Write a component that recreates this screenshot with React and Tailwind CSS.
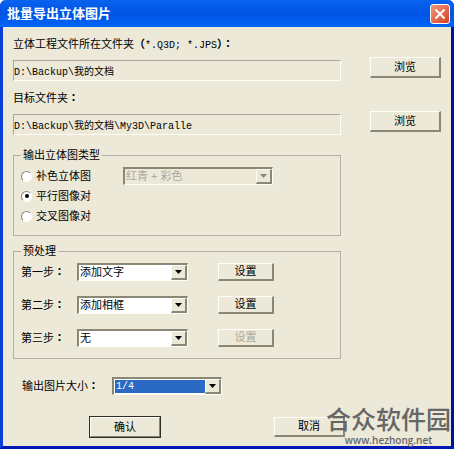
import React, { useState } from 'react';

const steps = [
  { id: 'step1', label: '第一步', value: '添加文字', enabled: true },
  { id: 'step2', label: '第二步', value: '添加相框', enabled: true },
  { id: 'step3', label: '第三步', value: '无', enabled: false },
];

const outputTypes = [
  { id: 'anaglyph', label: '补色立体图' },
  { id: 'parallel', label: '平行图像对' },
  { id: 'cross', label: '交叉图像对' },
];

// Full-width punctuation is centred in its cell in the TC face
function Punct({ children }) {
  return <span className="font-['Noto_Sans_CJK_TC',sans-serif] font-bold">{children}</span>;
}

function Button({ children, className = '', disabled = false, primary = false }) {
  return (
    <button
      type="button"
      disabled={disabled}
      className={`flex items-center justify-center border-t border-l border-[#fffef6] border-r-[#8a8776] border-b-[#8a8776] ${
        primary ? 'border-r border-b outline outline-1 outline-[#2e2d28]' : 'border-r-2 border-b-2'
      } disabled:text-[#aca899] ${className}`}
    >
      {children}
    </button>
  );
}

function Dropdown({ id, label, options, disabled = false, selected = false, className = '' }) {
  return (
    <div className={`grid border-t-2 border-l-2 border-r border-b border-t-[#8a8776] border-l-[#8a8776] border-r-[#fffef6] border-b-[#fffef6] ${disabled ? '' : 'bg-white'} ${className}`}>
      <select
        id={id}
        aria-label={label}
        disabled={disabled}
        className={`col-start-1 row-start-1 w-full min-w-0 appearance-none pr-5 leading-[13px] opacity-100 outline-none disabled:text-[#aca899] ${
          selected
            ? "border border-white bg-[#2a6ac4] bg-clip-padding pl-px font-['Liberation_Mono','Noto_Sans_CJK_SC',monospace] text-[10px] text-white"
            : 'pl-px'
        }`}
      >
        {options.map(o => <option key={o}>{o}</option>)}
      </select>
      <span className="pointer-events-none col-start-1 row-start-1 flex w-4 items-center justify-center justify-self-end border-t border-l border-r-2 border-b-2 border-[#fffef6] border-r-[#8a8776] border-b-[#8a8776] bg-[#ece9d8]">
        <svg width="7" height="4" viewBox="0 0 7 4" className={disabled ? 'fill-[#8a8776]' : 'fill-black'}>
          <path d="M0 0h7L3.5 4z" />
        </svg>
      </span>
    </div>
  );
}

function PathField({ id, label, value }) {
  return (
    <div className="flex items-end justify-between">
      <div className="w-[328px]">
        <label htmlFor={id} className="block h-4 whitespace-nowrap leading-4">{label}</label>
        <input
          id={id}
          readOnly
          defaultValue={value}
          className="mt-[9px] block h-[21px] w-full border border-[#fffef6] border-t-[#aca899] border-l-[#aca899] font-['Liberation_Mono','Noto_Sans_CJK_SC',monospace] text-[10px] outline-none"
        />
      </div>
      <Button className="mb-[3px] h-[21px] w-[71px]">浏览</Button>
    </div>
  );
}

export default function App() {
  const [type, setType] = useState('parallel');

  return (
    <div className="bg-white pr-[1px] font-['Liberation_Sans','Noto_Sans_CJK_SC',sans-serif] text-[11px] text-black">
      <div className="relative rounded-t-md border-3 border-t-0 border-[#0a3fd8] border-r-[#00109a] border-b-[#0018b4] bg-[#ece9d8]">
        <header className="-mx-[3px] flex h-[27px] items-center justify-between rounded-t-md bg-linear-to-b from-[#0a62f0] via-[#0054e3] to-[#0064fa] pr-1 pl-[7px]">
          <h1 className="text-[13px] font-bold text-white">批量导出立体图片</h1>
          <button type="button" aria-label="关闭" className="flex size-5 items-center justify-center rounded-[3px] border border-white bg-linear-to-br from-[#f0957c] to-[#d63c17]">
            <svg width="12" height="12" viewBox="0 0 12 12" className="stroke-white stroke-2">
              <path d="M1.5 1.5l9 9M10.5 1.5l-9 9" />
            </svg>
          </button>
        </header>

        <main className="px-[10px] pt-2 pb-[9px]">
          <PathField
            id="source"
            label={<>立体工程文件所在文件夹<Punct>（</Punct><span className="font-['Liberation_Mono',monospace] text-[10px]">*.Q3D; *.JPS</span><Punct>）：</Punct></>}
            value="D:\Backup\我的文档"
          />
          <div className="mt-2">
            <PathField id="target" label={<>目标文件夹<Punct>：</Punct></>} value="D:\Backup\我的文档\My3D\Paralle" />
          </div>

          <fieldset className="mt-3 w-[328px] border border-[#b4b1a2] px-[7px] pb-[11px]">
            <legend className="px-[2px] leading-4">输出立体图类型</legend>
            <div className="flex justify-between pr-[60px]">
              <div className="flex flex-col gap-1 pt-[5px]">
                {outputTypes.map(t => (
                  <label key={t.id} className="flex items-center gap-1 leading-4">
                    <input
                      type="radio"
                      name="type"
                      checked={type === t.id}
                      onChange={() => setType(t.id)}
                      className="flex size-[11px] appearance-none items-center justify-center rounded-full border border-[#fffef6] border-t-[#8a8776] border-l-[#8a8776] bg-white before:size-1 before:rounded-full checked:before:bg-black"
                    />
                    {t.label}
                  </label>
                ))}
              </div>
              <Dropdown label="补色类型" options={['红青 + 彩色']} disabled className="mt-1 h-[18px] w-[150px]" />
            </div>
          </fieldset>

          <fieldset className="mt-[7px] w-[328px] border border-[#b4b1a2] px-[7px] pb-[11px]">
            <legend className="px-[2px] leading-4">预处理</legend>
            <div className="flex flex-col gap-[15px] pt-1">
              {steps.map(s => (
                <div key={s.id} className="flex items-center">
                  <label htmlFor={s.id} className="w-[56px]">{s.label}<Punct>：</Punct></label>
                  <Dropdown id={s.id} options={[s.value]} className="h-[18px] w-[111px]" />
                  <Button disabled={!s.enabled} className="ml-[30px] h-[18px] w-[56px]">设置</Button>
                </div>
              ))}
            </div>
          </fieldset>

          <div className="mt-[18px] flex items-center pl-[9px]">
            <label htmlFor="size" className="w-[90px]">输出图片大小<Punct>：</Punct></label>
            <Dropdown id="size" options={['1/4']} selected className="h-[18px] w-[110px]" />
          </div>

          <div className="mt-[22px] flex gap-[114px] pl-[77px]">
            <Button primary className="h-5 w-[70px]">确认</Button>
            <Button className="h-5 w-[71px]">取消</Button>
          </div>
        </main>

        <div className="pointer-events-none absolute right-0 bottom-0 w-[125px] text-center text-[#666666]">
          <p className="text-[25px] leading-7 font-medium whitespace-nowrap">合众软件园</p>
          <p className="font-['Open_Sans',sans-serif] text-[10px] leading-3 font-semibold">www.hezhong.net</p>
        </div>
      </div>
    </div>
  );
}
